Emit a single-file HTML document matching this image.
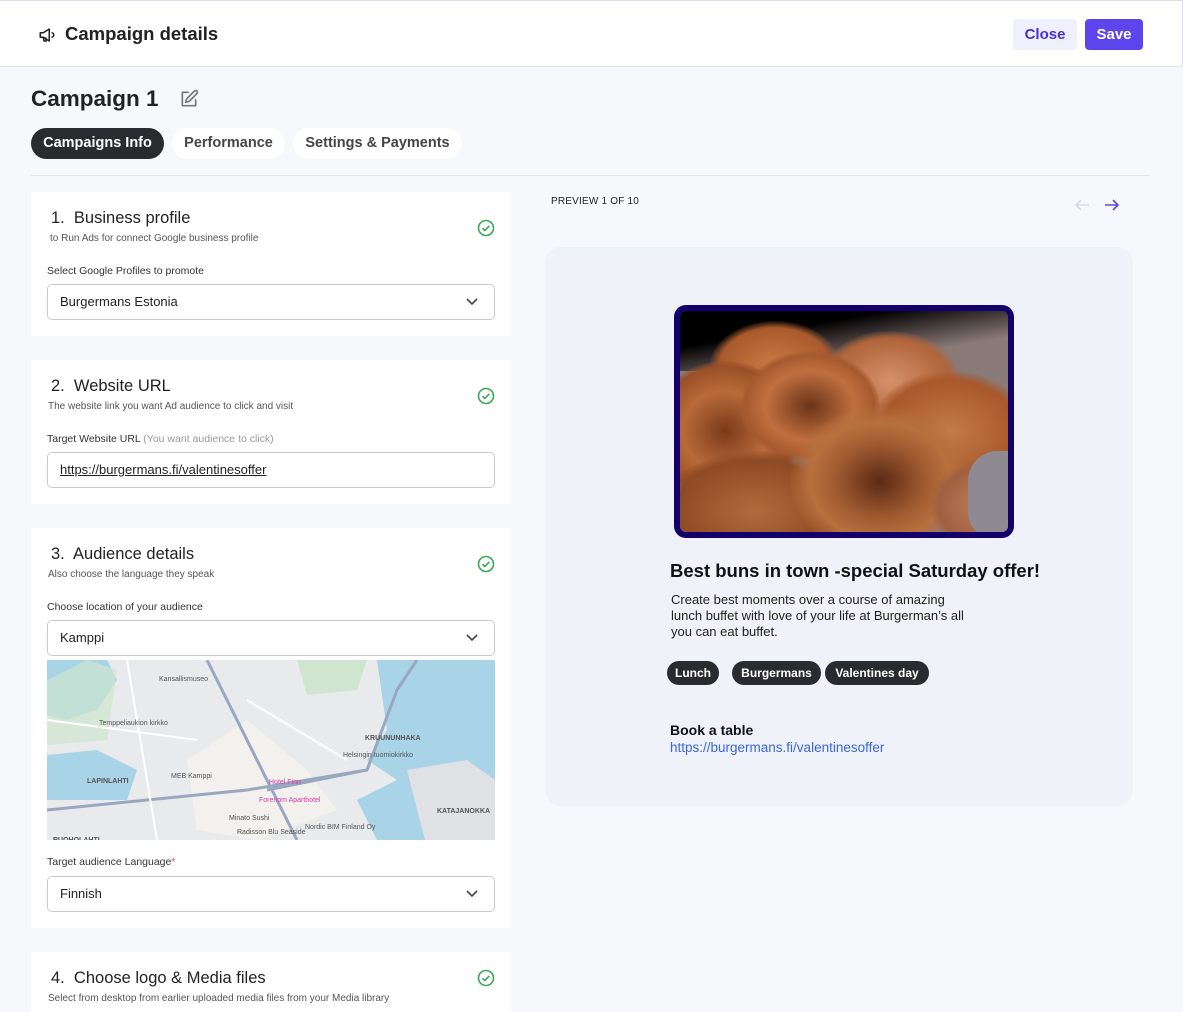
<!DOCTYPE html>
<html><head><meta charset="utf-8">
<style>
*{box-sizing:border-box;margin:0;padding:0}
body{width:1183px;height:1000px;overflow:hidden;background:#f7f8fc;font-family:"Liberation Sans",sans-serif;color:#222;position:relative}
.abs{position:absolute}
.hdr{left:0;top:0;width:1183px;height:67px;background:#fff;border-top:1px solid #dcdde6;border-bottom:1px solid #e3e5ee;border-right:1px solid #dcdde6}
.btn{top:18px;height:31px;border-radius:4px;font-size:15px;font-weight:bold;line-height:31px;text-align:center}
.tab{top:128px;height:31px;border-radius:16px;font-size:14.5px;font-weight:bold;line-height:31px;text-align:center;background:#fff;color:#444}
.card{left:31px;width:480px;background:#fff}
.h{font-size:16.5px;color:#222;position:absolute;left:20px}
.sub{font-size:10px;color:#555;position:absolute;left:17px}
.lbl{font-size:10.5px;color:#333;position:absolute;left:16px}
.inp{position:absolute;left:16px;width:448px;height:36px;border:1px solid #c9cacf;border-radius:5px;font-size:13px;line-height:34px;padding-left:12px;color:#222}
.inp svg{position:absolute;right:16px;top:13px}
.chk{position:absolute;left:446px}
.tag{top:661px;height:24px;border-radius:12px;background:#2a2b2e;color:#fff;font-size:12px;font-weight:bold;line-height:24px;text-align:center}
.bun{position:absolute;border-radius:50%}
</style></head><body>
<div class="abs hdr">
 <svg class="abs" style="left:38px;top:25px" width="18" height="18" viewBox="0 0 24 24" fill="none" stroke="#222" stroke-width="2" stroke-linejoin="round"><path d="M3 9v6h4l8 5V4L7 9z"/><path d="M7 15l1 5h3l-1-5"/><path d="M18 9a3 3 0 010 6"/></svg>
 <div class="abs" style="left:65px;top:22px;font-size:18.5px;font-weight:bold;color:#222">Campaign details</div>
 <div class="abs btn" style="left:1013px;width:64px;background:#f0effd;color:#4b2fd6">Close</div>
 <div class="abs btn" style="left:1085px;width:58px;background:#5d45ee;color:#fff">Save</div>
</div>
<div class="abs" style="left:31px;top:86px;font-size:22.5px;font-weight:bold;color:#222">Campaign 1</div>
<svg class="abs" style="left:179px;top:89px" width="20" height="20" viewBox="0 0 24 24" fill="none" stroke="#777" stroke-width="2" stroke-linecap="round" stroke-linejoin="round"><path d="M11 4H4v16h16v-7"/><path d="M18.5 2.5a2.1 2.1 0 013 3L12 15l-4 1 1-4z"/></svg>
<div class="abs tab" style="left:31px;width:133px;background:#2a2b2e;color:#fff">Campaigns Info</div>
<div class="abs tab" style="left:172px;width:113px">Performance</div>
<div class="abs tab" style="left:293px;width:169px">Settings &amp; Payments</div>
<div class="abs" style="left:31px;top:175px;width:1119px;height:1px;background:#e3e5ec"></div>

<svg width="0" height="0" style="position:absolute"><defs>
<g id="ck"><circle cx="9" cy="9" r="7.5" fill="none" stroke="#3aa757" stroke-width="1.6"/><path d="M5.5 9.2l2.3 2.3 4.5-4.6" fill="none" stroke="#3aa757" stroke-width="1.6"/></g>
<g id="dn"><path d="M1 1l5 5 5-5" fill="none" stroke="#444" stroke-width="1.6"/></g>
</defs></svg>

<div class="abs card" style="top:192px;height:144px">
 <div class="h" style="top:17px">1.&nbsp; Business profile</div>
 <div class="sub" style="top:41px;left:19px">to Run Ads for connect Google business profile</div>
 <svg class="chk" style="top:27px" width="18" height="18"><use href="#ck"/></svg>
 <div class="lbl" style="top:73px">Select Google Profiles to promote</div>
 <div class="inp" style="top:92px">Burgermans Estonia<svg width="12" height="8"><use href="#dn"/></svg></div>
</div>
<div class="abs card" style="top:360px;height:144px">
 <div class="h" style="top:17px">2.&nbsp; Website URL</div>
 <div class="sub" style="top:41px">The website link you want Ad audience to click and visit</div>
 <svg class="chk" style="top:27px" width="18" height="18"><use href="#ck"/></svg>
 <div class="lbl" style="top:73px">Target Website URL <span style="color:#999">(You want audience to click)</span></div>
 <div class="inp" style="top:92px"><span style="text-decoration:underline">https://burgermans.fi/valentinesoffer</span></div>
</div>
<div class="abs card" style="top:528px;height:400px">
 <div class="h" style="top:17px">3.&nbsp; Audience details</div>
 <div class="sub" style="top:41px">Also choose the language they speak</div>
 <svg class="chk" style="top:27px" width="18" height="18"><use href="#ck"/></svg>
 <div class="lbl" style="top:73px">Choose location of your audience</div>
 <div class="inp" style="top:92px">Kamppi<svg width="12" height="8"><use href="#dn"/></svg></div>
 <svg class="abs" style="left:16px;top:132px" width="448" height="180" viewBox="0 0 448 180">
  <rect width="448" height="180" fill="#e9eaec"/>
  <path d="M0 0h60l10 20-20 30-30 10-20-5z" fill="#a9d3e6"/>
  <path d="M0 95l50-5 40 20-10 30-80 0z" fill="#a9d3e6"/>
  <path d="M330 0h118v180H330l-20-40 40-20-30-20 20-30z" fill="#a9d3e6"/>
  <path d="M0 20l40-20 30 10-10 70-60 5z" fill="#cfe5cf" opacity=".7"/>
  <path d="M250 0h70l-10 30-50 5z" fill="#cfe5cf"/>
  <path d="M360 110l60-10 28 20v60h-70z" fill="#dfe1e4"/>
  <path d="M140 100l60-40 60 50 30 40-80 30-60-10z" fill="#f2f1ee"/>
  <path d="M160 0l90 180M0 150l200-20 120-20M220 130l100-20 30-80 20-30" stroke="#9aa7c0" stroke-width="3" fill="none"/>
  <path d="M80 0l30 180M0 60l150 20M200 40l100 60" stroke="#fff" stroke-width="2" fill="none"/>
  <g font-size="7" font-family="Liberation Sans" fill="#555"><text x="112" y="21">Kansallismuseo</text><text x="52" y="65">Temppeliaukion kirkko</text><text x="318" y="80" font-weight="bold">KRUUNUNHAKA</text><text x="296" y="97">Helsingin tuomiokirkko</text><text x="40" y="123" font-weight="bold">LAPINLAHTI</text><text x="124" y="118">MEB Kamppi</text><text x="190" y="174">Radisson Blu Seaside</text><text x="258" y="169">Nordic BIM Finland Oy</text><text x="390" y="153" font-weight="bold">KATAJANOKKA</text><text x="6" y="182" font-weight="bold">RUOHOLAHTI</text><text x="182" y="160">Minato Sushi</text></g>
  <g font-size="7" fill="#d63ca6" font-family="Liberation Sans"><text x="222" y="124">Hotel Finn</text><text x="212" y="142">Forenom Aparthotel</text></g>
 </svg>
 <div class="lbl" style="top:328px">Target audience Language<span style="color:#e05a3a">*</span></div>
 <div class="inp" style="top:348px">Finnish<svg width="12" height="8"><use href="#dn"/></svg></div>
</div>
<div class="abs card" style="top:952px;height:60px">
 <div class="h" style="top:17px">4.&nbsp; Choose logo &amp; Media files</div>
 <div class="sub" style="top:41px">Select from desktop from earlier uploaded media files from your Media library</div>
 <svg class="chk" style="top:17px" width="18" height="18"><use href="#ck"/></svg>
</div>

<div class="abs" style="left:551px;top:196px;font-size:10px;color:#222;letter-spacing:.2px">PREVIEW 1 OF 10</div>
<svg class="abs" style="left:1074px;top:197px" width="16" height="16" viewBox="0 0 16 16" fill="none" stroke="#d9d9ef" stroke-width="1.6"><path d="M15 8H2M7 3L2 8l5 5"/></svg>
<svg class="abs" style="left:1104px;top:197px" width="16" height="16" viewBox="0 0 16 16" fill="none" stroke="#5d45ee" stroke-width="1.6"><path d="M1 8h13M9 3l5 5-5 5"/></svg>
<div class="abs" style="left:545px;top:247px;width:588px;height:559px;background:#eff2f9;border-radius:16px"></div>
<div class="abs" style="left:674px;top:305px;width:340px;height:233px;border:6px solid #13006b;border-radius:12px;overflow:hidden;background:#8a7a78">
 <div class="abs" style="left:0;top:0;width:340px;height:60px;background:linear-gradient(170deg,#000 30%,rgba(0,0,0,0) 70%)"></div>
 <div class="bun" style="left:30px;top:10px;width:130px;height:90px;background:radial-gradient(#c97a45,#a85a2c 60%,rgba(0,0,0,0) 72%)"></div>
 <div class="bun" style="left:140px;top:20px;width:140px;height:100px;background:radial-gradient(#d4916a,#b0643a 60%,rgba(0,0,0,0) 72%)"></div>
 <div class="bun" style="left:-30px;top:50px;width:150px;height:140px;background:radial-gradient(#7a3a1a,#b86a3a 40%,#9a4f26 65%,rgba(0,0,0,0) 72%)"></div>
 <div class="bun" style="left:60px;top:40px;width:140px;height:110px;background:radial-gradient(#6b3318,#c07040 45%,#a55a2e 65%,rgba(0,0,0,0) 72%)"></div>
 <div class="bun" style="left:190px;top:60px;width:160px;height:120px;background:radial-gradient(#c47a4a,#a8582c 60%,rgba(0,0,0,0) 72%)"></div>
 <div class="bun" style="left:-20px;top:140px;width:190px;height:120px;background:radial-gradient(#b06a3a,#8e4a24 60%,rgba(0,0,0,0) 72%)"></div>
 <div class="bun" style="left:110px;top:95px;width:180px;height:150px;background:radial-gradient(#5a2a14,#a05a30 35%,#b8703e 55%,rgba(0,0,0,0) 72%)"></div>
 <div class="bun" style="left:250px;top:150px;width:110px;height:90px;background:radial-gradient(#c08060,#a06040 60%,rgba(0,0,0,0) 72%)"></div>
 <div class="abs" style="right:0;top:140px;width:40px;height:90px;background:#8e8a92;border-radius:30px 0 0 30px"></div>
</div>
<div class="abs" style="left:670px;top:560px;font-size:18.5px;font-weight:bold;color:#111">Best buns in town -special Saturday offer!</div>
<div class="abs" style="left:671px;top:592px;width:300px;font-size:13px;line-height:16px;color:#222">Create best moments over a course of amazing lunch buffet with love of your life at Burgerman’s all you can eat buffet.</div>
<div class="abs tag" style="left:667px;width:52px">Lunch</div>
<div class="abs tag" style="left:732px;width:89px">Burgermans</div>
<div class="abs tag" style="left:825px;width:104px">Valentines day</div>
<div class="abs" style="left:670px;top:722px;font-size:14px;font-weight:bold;color:#111">Book a table</div>
<div class="abs" style="left:670px;top:740px;font-size:13.5px;color:#3a66d6">https://burgermans.fi/valentinesoffer</div>
</body></html>
